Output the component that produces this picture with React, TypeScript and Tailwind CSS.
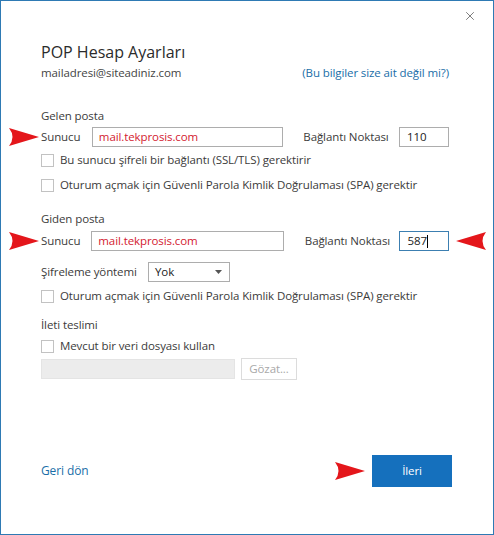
import { X } from 'lucide-react';

const FONT = "font-['Segoe_UI','Open_Sans','Noto_Sans',sans-serif]";

// red pointer used in the screenshot annotation
function Pointer({ flip = false }: { flip?: boolean }) {
  return (
    <svg width="32" height="20" viewBox="0 0 32 20" className={flip ? '-scale-x-100' : ''}>
      <path d="M1 1 L31 10 L1 19 Q8 10 1 1 Z" fill="#e4161b" />
    </svg>
  );
}

function Checkbox({ label }: { label: string }) {
  return (
    <div className="flex items-center h-[18px] whitespace-nowrap">
      <span className="w-[13px] h-[13px] border border-[#c2c2c2] bg-white" />
      <span className="ml-[6px]">{label}</span>
    </div>
  );
}

function ServerRow({ inputW, portGap, focused }: { inputW: string; portGap: string; focused?: boolean }) {
  return (
    <div className="relative flex items-center h-[20px] whitespace-nowrap">
      <div className="absolute -left-[33px] top-0">
        <Pointer />
      </div>
      <span className="w-[51px]">Sunucu</span>
      <div className={`${inputW} h-[20px] border border-[#adadad] flex items-center px-[6px] text-[#d3202f]`}>
        mail.tekprosis.com
      </div>
      <span className={`${portGap} w-[96px]`}>Bağlantı Noktası</span>
      {focused ? (
        <div className="w-[50px] h-[20px] border border-[#3c7fb1] flex items-center px-[7px] text-[#222]">
          587<span className="w-px h-[13px] bg-black" />
        </div>
      ) : (
        <div className="w-[50px] h-[20px] border border-[#adadad] flex items-center px-[7px] text-[#222]">
          110
        </div>
      )}
    </div>
  );
}

export default function App() {
  return (
    <div className={`${FONT} w-[494px] h-[535px] bg-white border border-[#2e7ab4] text-[11.5px] tracking-[-0.1px] text-[#3b3b3b] flex flex-col`}>
      <div className="h-[29px] flex justify-end items-center pr-[16px]">
        <X size={14} strokeWidth={1.3} className="text-[#555]" />
      </div>

      <div className="pl-[40px] pr-[44px] flex flex-col">
        <div className="mt-[12px] h-[20px] flex items-center text-[16px] tracking-normal text-[#2b2b2b]">POP Hesap Ayarları</div>
        <div className="mt-[2px] h-[18px] flex items-center justify-between">
          <span className="text-[#444]">mailadresi@siteadiniz.com</span>
          <span className="text-[#1a6ea8]">(Bu bilgiler size ait değil mi?)</span>
        </div>

        <div className="mt-[25px] h-[18px] flex items-center">Gelen posta</div>
        <div className="mt-[2px]">
          <ServerRow inputW="w-[192px]" portGap="ml-[20px]" />
        </div>
        <div className="mt-[4px]">
          <Checkbox label="Bu sunucu şifreli bir bağlantı (SSL/TLS) gerektirir" />
        </div>
        <div className="mt-[7px]">
          <Checkbox label="Oturum açmak için Güvenli Parola Kimlik Doğrulaması (SPA) gerektir" />
        </div>

        <div className="mt-[16px] h-[18px] flex items-center">Giden posta</div>
        <div className="relative mt-[3px]">
          <ServerRow inputW="w-[195px]" portGap="ml-[21px]" focused />
          <div className="absolute left-[414px] top-0">
            <Pointer flip />
          </div>
        </div>
        <div className="mt-[11px] h-[20px] flex items-center whitespace-nowrap">
          <span className="w-[107px]">Şifreleme yöntemi</span>
          <div className="w-[82px] h-[20px] border border-[#adadad] flex items-center justify-between pl-[6px] pr-[7px] text-[#222]">
            Yok
            <svg width="7" height="4" viewBox="0 0 7 4">
              <path d="M0 0 H7 L3.5 4 Z" fill="#555" />
            </svg>
          </div>
        </div>
        <div className="mt-[5px]">
          <Checkbox label="Oturum açmak için Güvenli Parola Kimlik Doğrulaması (SPA) gerektir" />
        </div>

        <div className="mt-[11px] h-[18px] flex items-center">İleti teslimi</div>
        <div className="mt-[3px]">
          <Checkbox label="Mevcut bir veri dosyası kullan" />
        </div>
        <div className="mt-[3px] flex items-center">
          <div className="w-[194px] h-[20px] bg-[#ececec] border border-[#e4e4e4]" />
          <div className="ml-[6px] w-[56px] h-[22px] border border-[#dcdcdc] flex items-center justify-center text-[#a8a8a8]">
            Gözat...
          </div>
        </div>

        <div className="mt-[75px] flex items-center justify-between">
          <span className="text-[#1a6ea8] text-[12px]">Geri dön</span>
          <div className="flex items-center mr-[-3px]">
            <Pointer />
            <div className="ml-[6px] w-[80px] h-[32px] bg-[#1570bd] text-white flex items-center justify-center">
              İleri
            </div>
          </div>
        </div>
      </div>
    </div>
  );
}
